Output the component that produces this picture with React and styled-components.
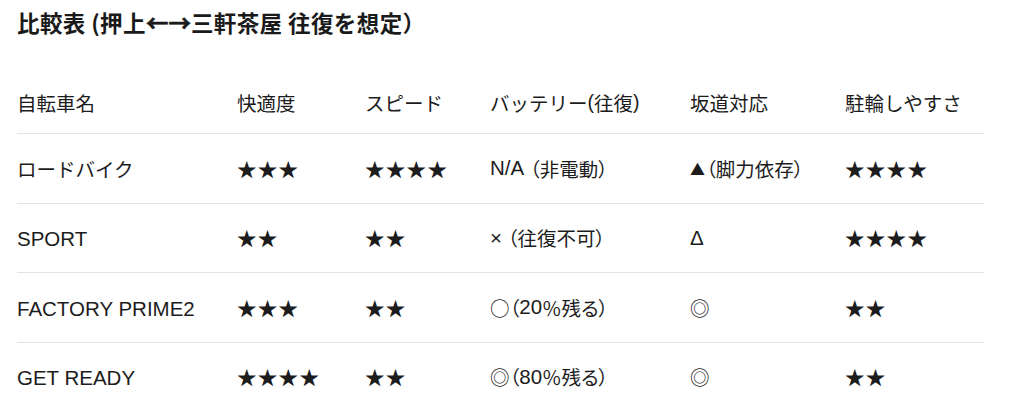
import React from "react";
import styled, { createGlobalStyle } from "styled-components";

const GlobalStyle = createGlobalStyle`
  html, body {
    margin: 0;
    padding: 0;
    background: #ffffff;
  }
  body {
    font-family: "Liberation Sans", "Noto Sans CJK JP", sans-serif;
    color: #1c1c1c;
  }
`;

const Page = styled.div`
  padding: 8px 40px 0 17px;
  width: 967px;
`;

const Title = styled.h2`
  margin: 0;
  font-family: "Noto Sans CJK JP", sans-serif;
  font-size: 22.5px;
  font-weight: 700;
  line-height: 28px;
  letter-spacing: 0.4px;
  color: #1a1a1a;
`;

const Arrow = styled.span`
  display: inline-block;
  width: 1em;
  text-align: center;
  -webkit-text-stroke: 0.6px #1a1a1a;
`;

const Table = styled.div`
  margin-top: 35px;
  display: grid;
  grid-template-columns: 220px 128px 125px 200px 155px 1fr;
`;

const Row = styled.div`
  display: contents;
`;

const fonts = {
  latin: '"Liberation Sans", "Noto Sans CJK JP", sans-serif',
  cjk: '"Noto Sans CJK JP", sans-serif',
};

const Cell = styled.div`
  box-sizing: border-box;
  height: ${(p) => (p.$head ? "63px" : "69.5px")};
  padding-top: ${(p) => (p.$latin ? "3px" : "0")};
  display: flex;
  align-items: center;
  border-bottom: 1px solid #e4e4e4;
  font-size: ${(p) => (p.$latin ? "20.5px" : "19.5px")};
  font-family: ${(p) => (p.$latin ? fonts.latin : fonts.cjk)};
  font-feature-settings: ${(p) => (p.$palt ? '"palt"' : "normal")};
  white-space: nowrap;
`;

const Paren = styled.span`
  font-family: "Liberation Sans", sans-serif;
`;

const Latin = styled.span`
  font-family: "Liberation Sans", sans-serif;
  font-size: 20.5px;
`;

const Triangle = styled.span`
  font-size: 15px;
  margin-right: 1px;
`;

const Stars = styled.span`
  font-family: "Noto Sans CJK JP", sans-serif;
  font-size: 19.5px;
  letter-spacing: 1.3px;
`;

const headers = [
  "自転車名",
  "快適度",
  "スピード",
  <>
    バッテリー<Paren>(</Paren>往復<Paren>)</Paren>
  </>,
  "坂道対応",
  "駐輪しやすさ",
];

const rows = [
  {
    name: "ロードバイク",
    comfort: 3,
    speed: 4,
    battery: (
      <>
        <Latin>N/A&nbsp;</Latin>（非電動）
      </>
    ),
    hill: (
      <>
        <Triangle>▲</Triangle>（脚力依存）
      </>
    ),
    parking: 4,
  },
  {
    name: "SPORT",
    latin: true,
    comfort: 2,
    speed: 2,
    battery: (
      <>
        <Latin>×&nbsp;</Latin>（往復不可）
      </>
    ),
    hill: <Latin>Δ</Latin>,
    parking: 4,
  },
  {
    name: "FACTORY PRIME2",
    latin: true,
    comfort: 3,
    speed: 2,
    battery: (
      <>
        ○（<Latin>20</Latin>％残る）
      </>
    ),
    hill: "◎",
    parking: 2,
  },
  {
    name: "GET READY",
    latin: true,
    comfort: 4,
    speed: 2,
    battery: (
      <>
        ◎（<Latin>80</Latin>％残る）
      </>
    ),
    hill: "◎",
    parking: 2,
  },
];

const star = (n) => <Stars>{"★".repeat(n)}</Stars>;

export default function App() {
  return (
    <>
      <GlobalStyle />
      <Page>
        <Title>
          比較表 (押上<Arrow>←</Arrow>
          <Arrow>→</Arrow>三軒茶屋 往復を想定）
        </Title>
        <Table>
          <Row>
            {headers.map((h, i) => (
              <Cell key={i} $head>
                {h}
              </Cell>
            ))}
          </Row>
          {rows.map((r) => (
            <Row key={r.name}>
              <Cell $latin={r.latin}>{r.name}</Cell>
              <Cell>{star(r.comfort)}</Cell>
              <Cell>{star(r.speed)}</Cell>
              <Cell $palt>{r.battery}</Cell>
              <Cell $palt>{r.hill}</Cell>
              <Cell>{star(r.parking)}</Cell>
            </Row>
          ))}
        </Table>
      </Page>
    </>
  );
}
